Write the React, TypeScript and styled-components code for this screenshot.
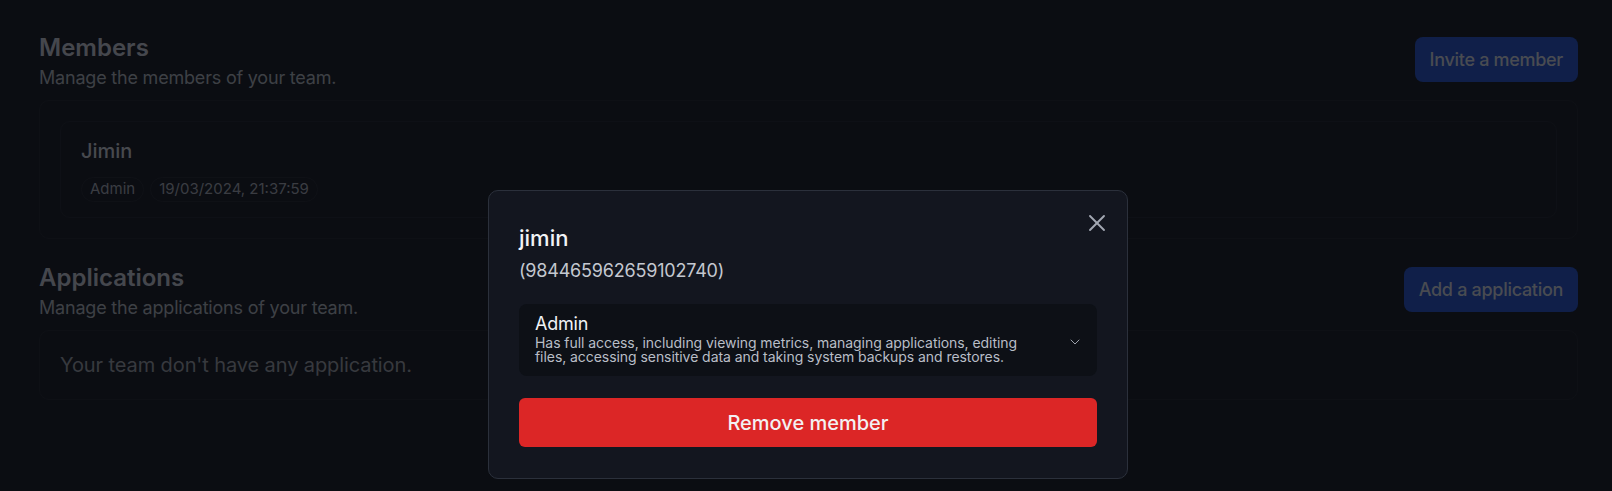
import { createGlobalStyle, styled } from "styled-components";
import { ChevronDown, X } from "lucide-react";

const GlobalStyle = createGlobalStyle`
  html, body {
    margin: 0;
    background: #1c212e;
    font-family: Inter, "Noto Sans", "Liberation Sans", sans-serif;
  }
  * {
    box-sizing: border-box;
  }
`;

const Page = styled.main`
  padding: 32px 34px 40px 39px;
  display: flex;
  flex-direction: column;
  gap: 23px;
`;
const Section = styled.section`
  display: flex;
  flex-direction: column;
  gap: 8px;
`;
const SectionHeader = styled.div`
  display: flex;
  justify-content: space-between;
  align-items: flex-start;
`;
const Title = styled.h2`
  margin: 0;
  font-size: 24px;
  line-height: 32px;
  font-weight: 600;
  color: #adb2c0;
`;
const Subtitle = styled.p`
  margin: 0;
  font-size: 18px;
  line-height: 28px;
  letter-spacing: -0.2px;
  color: #9aa0ad;
`;
const PrimaryButton = styled.button`
  margin-top: 5px;
  height: 45px;
  padding: 0 15px;
  border: none;
  border-radius: 8px;
  background: #284fb6;
  color: #b6bccb;
  font-family: inherit;
  font-size: 18px;
  font-weight: 500;
  letter-spacing: -0.3px;
  cursor: pointer;
`;
const ListBox = styled.div`
  border: 1px solid #242936;
  border-radius: 10px;
  padding: 20px;
`;
const MemberCard = styled.div`
  border: 1px solid #252a37;
  border-radius: 10px;
  padding: 15px 20px;
`;
const MemberName = styled.div`
  font-size: 20px;
  line-height: 28px;
  font-weight: 500;
  color: #b2b7c3;
`;
const BadgeRow = styled.div`
  display: flex;
  gap: 6px;
  margin-top: 12px;
`;
const Badge = styled.span`
  border: 1px solid #262b38;
  border-radius: 999px;
  padding: 1px 8px 2px;
  font-size: 15px;
  line-height: 20px;
  color: #9197a6;
`;
const EmptyBox = styled.div`
  border: 1px solid #242936;
  border-radius: 10px;
  padding: 20px;
  font-size: 20px;
  line-height: 28px;
  letter-spacing: -0.1px;
  color: #8a909c;
`;

const Overlay = styled.div`
  position: fixed;
  inset: 0;
  background: rgba(0, 0, 0, 0.6);
  display: flex;
  justify-content: center;
  align-items: flex-start;
  padding: 190px 0 0 4px;
`;
const Modal = styled.div`
  position: relative;
  width: 640px;
  background: #13161f;
  border: 1px solid #2b303b;
  border-radius: 10px;
  padding: 32px 30px 31px;
  display: flex;
  flex-direction: column;
`;
const CloseButton = styled.button`
  position: absolute;
  top: 18px;
  right: 16px;
  width: 28px;
  height: 28px;
  padding: 0;
  border: none;
  background: transparent;
  color: #a3a8b3;
  display: flex;
  align-items: center;
  justify-content: center;
  cursor: pointer;
`;
const ModalTitle = styled.h3`
  margin: 0;
  font-size: 22px;
  line-height: 30px;
  font-weight: 500;
  color: #f1f3f6;
`;
const ModalId = styled.p`
  margin: 4px 0 0;
  font-size: 18px;
  line-height: 28px;
  letter-spacing: -0.2px;
  color: #c4c8d0;
`;
const RoleSelect = styled.button`
  margin-top: 19px;
  display: flex;
  align-items: center;
  width: 100%;
  padding: 8px 14px 12px 16px;
  border: none;
  border-radius: 8px;
  background: #0d1016;
  text-align: left;
  font-family: inherit;
  cursor: pointer;
`;
const RoleText = styled.div`
  flex: 1;
  padding-right: 32px;
`;
const RoleName = styled.div`
  font-size: 18px;
  line-height: 24px;
  letter-spacing: -0.2px;
  color: #f1f3f6;
`;
const RoleDesc = styled.div`
  font-size: 14px;
  line-height: 14px;
  letter-spacing: -0.06px;
  color: #b9bec7;
`;
const ChevronIcon = styled(ChevronDown)`
  margin-top: 8px;
  color: #9ca1ab;
  flex-shrink: 0;
`;
const DangerButton = styled.button`
  margin-top: 22px;
  height: 49px;
  width: 100%;
  border: none;
  border-radius: 6px;
  background: #dc2626;
  color: #f3f1f2;
  font-family: inherit;
  font-size: 20px;
  font-weight: 500;
  cursor: pointer;
`;

export default function App() {
  return (
    <>
      <GlobalStyle />
      <Page>
        <Section>
          <SectionHeader>
            <div>
              <Title>Members</Title>
              <Subtitle>Manage the members of your team.</Subtitle>
            </div>
            <PrimaryButton>Invite a member</PrimaryButton>
          </SectionHeader>
          <ListBox>
            <MemberCard>
              <MemberName>Jimin</MemberName>
              <BadgeRow>
                <Badge>Admin</Badge>
                <Badge>19/03/2024, 21:37:59</Badge>
              </BadgeRow>
            </MemberCard>
          </ListBox>
        </Section>
        <Section>
          <SectionHeader>
            <div>
              <Title>Applications</Title>
              <Subtitle>Manage the applications of your team.</Subtitle>
            </div>
            <PrimaryButton>Add a application</PrimaryButton>
          </SectionHeader>
          <EmptyBox>Your team don't have any application.</EmptyBox>
        </Section>
      </Page>
      <Overlay>
        <Modal>
          <CloseButton aria-label="Close">
            <X size={28} strokeWidth={1.6} />
          </CloseButton>
          <ModalTitle>jimin</ModalTitle>
          <ModalId>(984465962659102740)</ModalId>
          <RoleSelect>
            <RoleText>
              <RoleName>Admin</RoleName>
              <RoleDesc>
                Has full access, including viewing metrics, managing
                applications, editing files, accessing sensitive data and
                taking system backups and restores.
              </RoleDesc>
            </RoleText>
            <ChevronIcon size={16} strokeWidth={1.5} />
          </RoleSelect>
          <DangerButton>Remove member</DangerButton>
        </Modal>
      </Overlay>
    </>
  );
}
